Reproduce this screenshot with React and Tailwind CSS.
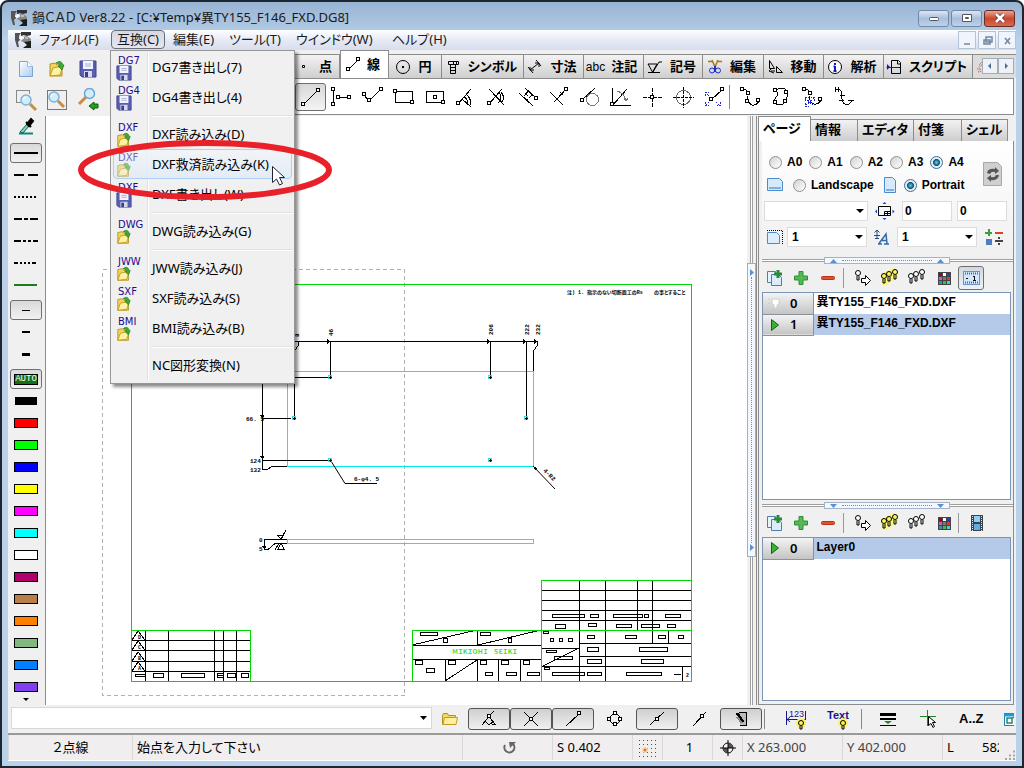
import React, { useState } from 'react';
import clsx from 'clsx';

const UI_FONT = "font-['Noto_Sans','Noto_Sans_CJK_JP',sans-serif]";
const BOLD_FONT = "font-['Liberation_Sans','Noto_Sans_CJK_JP',sans-serif] font-bold";

/* ---------- small drawing helpers ---------- */

const Svg = ({ w = 24, h = 24, children, className, crisp }) => (
    <svg
        width={w}
        height={h}
        viewBox={`0 0 ${w} ${h}`}
        fill="none"
        stroke="#000"
        shapeRendering={crisp ? 'crispEdges' : undefined}
        className={clsx('shrink-0', className)}
        aria-hidden="true"
    >
        {children}
    </svg>
);

const Node = ({ x, y }) => (
    <rect x={Math.floor(x) - 1.5} y={Math.floor(y) - 1.5} width="3" height="3" fill="#fff" stroke="#000" shapeRendering="crispEdges" />
);

const AppIcon = () => (
    <Svg w={18} h={18}>
        <path d="M1 2h6l-2 3 1 4-2 2 1 5H3L1 9z" fill="#555" stroke="none" />
        <path d="M7 1h10v3l-4 1-4-1-2 3z" fill="#333" stroke="none" />
        <path d="M8 6l5-1 4 3v3l-6 1-4-2z" fill="#888" stroke="none" />
        <path d="M10 11l7-1v7H9l4-3z" fill="#1c1c1c" stroke="none" />
        <path d="M5 7l3-2 2 2-3 2zM11 7h3" fill="#fff" stroke="#eee" />
    </Svg>
);

const Page = () => (
    <Svg>
        <defs>
            <linearGradient id="pg" x1="0" y1="0" x2="1" y2="1">
                <stop offset="0" stopColor="#fff" />
                <stop offset="1" stopColor="#a8ccf2" />
            </linearGradient>
        </defs>
        <path d="M5.500 4.500h8l5 5v10h-13z" fill="url(#pg)" stroke="#7da3cf" />
        <path d="M13.500 4.500v5h5" fill="#fff" stroke="#9dbde0" />
    </Svg>
);

const FolderOpen = ({ size = 24, box = '0 0 24 24' }) => (
    <svg width={size} height={size} viewBox={box} fill="none" className="shrink-0" aria-hidden="true">
        <path d="M5 7l5-1 2 2h5v11H5z" fill="#f3d35c" stroke="#b8901c" />
        <path d="M5 19l3-8 10-2-3 9z" fill="#fff2a0" stroke="#c39a22" />
        <path d="M11 6q5-4 7 2h1l-2 5-4-4h2q-1-3-4-3z" fill="#3faa35" stroke="#1d7a1a" strokeWidth=".7" />
    </svg>
);

const Floppy = ({ size = 24, box = '0 0 24 24' }) => (
    <svg width={size} height={size} viewBox={box} fill="none" className="shrink-0" aria-hidden="true">
        <path d="M4 4h16v16H6l-2-2z" fill="#5a5fb0" stroke="#3f438f" />
        <rect x="7" y="4" width="10" height="8" fill="#f3f4ff" />
        <path d="M9 7h6M9 9h6" stroke="#a9aed8" />
        <rect x="8" y="14" width="8" height="6" fill="#d5d8ee" />
        <rect x="9" y="15" width="3" height="5" fill="#3b3f7d" />
    </svg>
);

const Lens = ({ x, y }) => (
    <g>
        <path d={`M${x + 4} ${y + 4}l6 6`} stroke="#c98b46" strokeWidth="3" />
        <circle cx={x} cy={y} r="5" fill="#d3ecfa" stroke="#7fb2d6" strokeWidth="1.500" />
        <path d={`M${x - 3} ${y}q1-3 3-3`} stroke="#fff" />
    </g>
);

const ZoomArea = () => (
    <Svg>
        <path d="M2 2.500h13M2.500 2v12M15.500 2v4M2 14.500h5" stroke="#888" />
        <Lens x={12} y={12} />
    </Svg>
);
const ZoomFit = () => (
    <Svg>
        <rect x="2.500" y="2.500" width="19" height="19" stroke="#777" />
        <Lens x={9} y={9} />
    </Svg>
);
const ZoomBack = () => (
    <Svg>
        <path d="M10 9l-7 7" stroke="#c98b46" strokeWidth="3" />
        <circle cx="13.500" cy="5.500" r="5" fill="#d3ecfa" stroke="#6aa5d8" strokeWidth="1.500" />
        <path d="M13 18l5-4v2h4v4h-4v2z" fill="#1ea01e" stroke="#0c600c" />
    </Svg>
);

const Copy = () => (
    <Svg w={20} h={20}>
        <path d="M2.500 3.500h8v11h-8z" fill="#eaf3fc" stroke="#4d7cae" />
        <path d="M6.500 6.500h7l3 3v8h-10z" fill="#dcecfb" stroke="#4d7cae" />
        <path d="M13 2v8M9 6h8" stroke="#2a8a3a" strokeWidth="3" />
    </Svg>
);
const Plus = () => (
    <Svg w={20} h={20}>
        <path d="M8 3.500h4v4.500h4.500v4H12v4.500H8V12H3.500V8H8z" fill="#55b955" stroke="#2e8f34" />
    </Svg>
);
const Minus = () => (
    <Svg w={20} h={20}>
        <rect x="3.500" y="8.500" width="13" height="3" rx="1" fill="#e0522c" stroke="#b8341a" />
    </Svg>
);

const Bulb = ({ x, y, fill }) => (
    <g>
        <circle cx={x} cy={y} r="2.500" fill={fill} stroke="#000" />
        <path d={`M${x - 1} ${y + 3}v4M${x + 1} ${y + 3}v4M${x - 1} ${y + 7}h2`} stroke="#000" />
    </g>
);
const BulbArrow = () => (
    <Svg w={20} h={20}>
        <Bulb x={5} y={5} fill="#fff" />
        <path d="M8.500 10.500h4v-3l5 5-5 5v-3h-4z" fill="#fff" />
    </Svg>
);
const Bulbs = ({ lit }) => (
    <Svg w={20} h={20}>
        {lit && <path d="M1 6L13 0l5 2v7L7 17H2z" fill="#f8f48a" stroke="none" />}
        <Bulb x={4} y={8} fill={lit ? '#fdf655' : '#fff'} />
        <Bulb x={9} y={6} fill={lit ? '#fdf655' : '#fff'} />
        <Bulb x={15} y={4} fill={lit ? '#fdf655' : '#fff'} />
    </Svg>
);
const Palette = () => (
    <Svg w={20} h={20}>
        <rect x="4" y="4" width="13" height="13" fill="#444" stroke="none" />
        {['#8d1010', '#fff', '#2a39c8', '#e04adf', '#777', '#f03030', '#15a0a8', '#38c038', '#2ad8e8'].map((c, i) => (
            <rect key={i} x={5 + (i % 3) * 4} y={5 + Math.floor(i / 3) * 4} width="3" height="3" fill={c} stroke="none" />
        ))}
    </Svg>
);
const Ruler = () => (
    <Svg w={20} h={20}>
        <rect x="2.500" y="3.500" width="16" height="13" fill="#d4e8fb" stroke="#6c93c8" />
        <path d="M4 5.500h14M4 14.500h14" stroke="#3f67b0" strokeDasharray="1 1" strokeWidth="2" />
        <path d="M5 10.500h2M13.500 8v5M12 8.500h1M12 12.500h3" stroke="#111" />
    </Svg>
);
const Film = () => (
    <Svg w={20} h={20}>
        <rect x="4" y="2" width="12" height="16" fill="#39414c" stroke="none" />
        <path d="M5.500 3v15M14.500 3v15" stroke="#dfe7f0" strokeDasharray="1 1" />
        <rect x="7" y="3" width="6" height="6" fill="#8fd0f5" stroke="none" />
        <rect x="7" y="11" width="6" height="6" fill="#5cb0e6" stroke="none" />
    </Svg>
);

/* ---------- menus ---------- */

const MENUS = [
    { label: 'ファイル(F)', w: 'w-[72px]' },
    { label: '互換(C)', w: 'w-[54px]' },
    { label: '編集(E)', w: 'w-[56px]' },
    { label: 'ツール(T)', w: 'w-[67px]' },
    { label: 'ウインドウ(W)', w: 'w-[96px]' },
    { label: 'ヘルプ(H)', w: 'w-[68px]' },
];

const COMPAT_MENU = [
    { tag: 'DG7', label: 'DG7書き出し(7)', save: true },
    { tag: 'DG4', label: 'DG4書き出し(4)', save: true },
    null,
    { tag: 'DXF', label: 'DXF読み込み(D)' },
    { tag: 'DXF', label: 'DXF救済読み込み(K)', active: true },
    { tag: 'DXF', label: 'DXF書き出し(W)', save: true },
    null,
    { tag: 'DWG', label: 'DWG読み込み(G)' },
    null,
    { tag: 'JWW', label: 'JWW読み込み(J)' },
    { tag: 'SXF', label: 'SXF読み込み(S)' },
    { tag: 'BMI', label: 'BMI読み込み(B)' },
    null,
    { label: 'NC図形変換(N)' },
];

const CompatMenu = () => (
    <div role="menu" className="absolute -left-px top-5 z-10 w-[185px] border border-[#979797] bg-[#f0f0f0] p-px pb-[3px] shadow-[3px_3px_3px_rgba(0,0,0,0.45)]">
        <div className="absolute bottom-0.5 left-[36px] top-0.5 w-0.5 border-l border-[#e0e0e0] bg-white" />
        {COMPAT_MENU.map((item, i) =>
            item === null ? (
                <div key={i} className="relative ml-[40px] flex h-[7px] items-center">
                    <div className="h-0.5 flex-1 border-t border-[#e0e0e0] bg-white" />
                </div>
            ) : (
                <button
                    key={i}
                    role="menuitem"
                    className={clsx(
                        'relative mx-px flex h-[30px] w-[179px] items-center rounded-sm border text-left text-[13px] text-black',
                        item.active ? 'border-[#aecff7] bg-linear-to-b from-[#f2f5f9]/80 to-[#dfeaf7]/80' : 'border-transparent'
                    )}
                >
                    <span className={clsx('flex h-full w-[38px] flex-col items-start justify-end pl-0.5', item.active && 'opacity-60')}>
                        {item.tag && (
                            <>
                                <span className="pl-0.5 font-['DejaVu_Sans'] text-[10px] leading-[9px] text-[#1d0a8c]">{item.tag}</span>
                                {item.save ? <Floppy size={16} box="3 3 18 18" /> : <FolderOpen size={16} box="3 3 18 18" />}
                            </>
                        )}
                    </span>
                    <span>{item.label}</span>
                </button>
            )
        )}
        {/* hand-drawn emphasis and the pointer lie over the menu */}
        <svg width="260" height="66" viewBox="0 0 260 66" className="pointer-events-none absolute left-[-36px] top-[86px] max-w-none" aria-hidden="true">
            <ellipse cx="130" cy="33" rx="124" ry="27" fill="none" stroke="#e8202a" strokeWidth="6" />
            <path d="M197.500 29.500v16l4-3.500 3 6 3-1.500-3-6h5z" fill="#fff" stroke="#223" />
        </svg>
    </div>
);

const CaptionButton = ({ label, close, children }) => (
    <button
        aria-label={label}
        className={clsx(
            'flex h-[17px] w-[31px] items-center justify-center rounded-[3px] border',
            close
                ? 'border-[#6b2a22] bg-linear-to-b from-[#e2a595] via-[#c9472c] to-[#d9694d]'
                : 'border-[#7288a8] bg-linear-to-b from-[#dbe7f5] via-[#a9bfda] to-[#bcd2ea]'
        )}
    >
        {children}
    </button>
);

const TitleBar = () => (
    <header className="flex h-[28px] items-center pl-0.5 pr-px pt-1 text-[13px] text-[#1a1a1a]">
        <AppIcon />
        <h1 className="ml-1 flex-1">鍋ＣＡＤ Ver8.22 - [C:¥Temp¥異TY155_F146_FXD.DG8]</h1>
        <div className="flex gap-0.5">
            <CaptionButton label="最小化">
                <Svg w={12} h={10}><rect x="1.500" y="4.500" width="9" height="3" rx="1" fill="#fff" stroke="#556" /></Svg>
            </CaptionButton>
            <CaptionButton label="最大化">
                <Svg w={12} h={10}><path d="M1.500 1.500h9v7h-9zM4.500 4.500h3v1h-3z" fill="#fff" stroke="#556" /></Svg>
            </CaptionButton>
            <CaptionButton label="閉じる" close>
                <Svg w={12} h={10}>
                    <path d="M2 1l8 8M10 1L2 9" stroke="#633" strokeWidth="4" />
                    <path d="M2 1l8 8M10 1L2 9" stroke="#fff" strokeWidth="2.500" />
                </Svg>
            </CaptionButton>
        </div>
    </header>
);

const MenuBar = () => (
    <nav className="flex h-[20px] items-center bg-linear-to-b from-white via-[#e6eaf5] to-[#d8ddee] pl-1.5 text-[13px] text-[#1a1a1a]">
        <AppIcon />
        <ul className="flex flex-1">
            {MENUS.map((m, i) => (
                <li key={m.label} className={clsx('relative shrink-0', m.w, i === 0 && 'ml-[7px]')}>
                    <button
                        className={clsx(
                            'h-[19px] whitespace-nowrap leading-[17px]',
                            i === 1 ? 'w-full rounded-sm border border-[#6a6e78] bg-linear-to-b from-[#d6d9e2] to-[#e4e6ee]' : i > 1 && 'pl-[8px]'
                        )}
                    >
                        {m.label}
                    </button>
                    {i === 1 && <CompatMenu />}
                </li>
            ))}
        </ul>
        <div className="flex gap-0.5">
            {[
                ['最小化', 'M5 12h6'],
                ['元に戻す', 'M7 5h6v5h-6zM5 8h6v4h-6z'],
                ['閉じる', 'M6 6l5 6M11 6l-5 6'],
            ].map(([label, d]) => (
                <button key={label} aria-label={label} className="flex h-[18px] w-[18px] items-center justify-center border border-[#b4c4d8] bg-[#f0f5fb]">
                    <Svg w={16} h={16}><path d={d} stroke="#7087a2" strokeWidth="1.500" /></Svg>
                </button>
            ))}
        </div>
    </nav>
);

/* ---------- top toolbar ---------- */

const TABS = [
    { label: '点', w: 'w-[48px]', icon: <path d="M7.500 7.500h2v2h-2z" fill="#fff" /> },
    {
        label: '線', w: 'w-[49px]', active: true,
        icon: <><path d="M4 13l9-9" /><Node x={3.5} y={13.5} /><Node x={13.5} y={3.5} /></>,
    },
    { label: '円', w: 'w-[53px]', icon: <><circle cx="9" cy="9" r="6.500" /><path d="M8 8h2v2H8z" fill="#000" stroke="none" /></> },
    { label: 'シンボル', w: 'w-[82px]', icon: <path d="M4.500 3.500h10v3h-10zM6.500 7v8.500h5V7M7 9.500h4M7 12.500h4M9.500 3v4M12.500 4v2" /> },
    { label: '寸法', w: 'w-[60px]', icon: <path d="M2 9l5 6M10 2l5 6M4 12l9-7M4 9v3h4M9 5h4v4" /> },
    { label: '注記', w: 'w-[60px]', abc: true },
    { label: '記号', w: 'w-[59px]', icon: <path d="M2 6h9l-4.500 8zM7 14l6-10h3M2 14.500h12" /> },
    {
        label: '編集', w: 'w-[61px]',
        icon: (
            <>
                <path d="M2 3.500h4M11 3.500h5M6 2l3 7 3-7" stroke="#a67c12" strokeWidth="1.500" />
                <circle cx="6" cy="12.500" r="2.500" stroke="#1c2fc4" />
                <circle cx="12" cy="12.500" r="2.500" stroke="#1c2fc4" />
                <path d="M8.500 8v6M9.500 8v6" stroke="#1c2fc4" />
            </>
        ),
    },
    { label: '移動', w: 'w-[60px]', icon: <path d="M3.500 2.500v8h5zM10.500 8.500v6h6zM5 13h4M5 11l-2 2 5 2" /> },
    {
        label: '解析', w: 'w-[60px]',
        icon: (
            <>
                <circle cx="9" cy="9" r="6.500" fill="#fff" />
                <path d="M9 5v2M9 8v5M7.500 8.500h1.500M7.500 13h3" stroke="#0c1cc8" strokeWidth="2" />
            </>
        ),
    },
    {
        label: 'スクリプト', w: 'w-[89px]',
        icon: (
            <>
                <path d="M6.500 2.500h7l2 2v11h-9zM6 9.500h10M12.500 3v3h3" />
                <path d="M2 6l3 3-3 3z" fill="#0c1cc8" stroke="none" />
                <path d="M1.500 9.500h12" stroke="#0c1cc8" />
            </>
        ),
    },
];

const LINE_TOOLS = [
    ['2点線', <><path d="M5 19L19 5" /><Node x={4.5} y={19.5} /><Node x={19.5} y={5.5} /></>],
    ['水平垂直線', <><path d="M3.500 5v14M8 12.500h12" /><Node x={3.5} y={4.5} /><Node x={3.5} y={19.5} /><Node x={8.500} y={12.500} /><Node x={19.5} y={12.5} /></>],
    ['連続線', <><path d="M3 10l5 6L20 4" /><Node x={3.5} y={9.500} /><Node x={8.5} y={15.5} /><Node x={20.5} y={4.5} /></>],
    ['矩形', <><path d="M3.500 6.500h17v11h-17z" /><Node x={3.5} y={6.5} /><Node x={20.5} y={17.5} /></>],
    ['中心矩形', <><path d="M3.500 6.500h17v11h-17z" /><Node x={12} y={12} /><Node x={20.5} y={17.5} /></>],
    ['角度線', <><path d="M4 19L17 4M8 14l9 8M10 12q4 2 4 8M12 9q5 4 5 11" /><Node x={4.500} y={18.500} /></>],
    ['二等分線', <><path d="M4 4l15 16M4 19L17 4M13 7q6 5 0 11M16 7q5 6 0 11" /><Node x={4.5} y={18.5} /></>],
    ['平行線', <><path d="M3 8l14 13M9 3l12 11M8 11l5-6M9 8l3 3" /><path d="M11 15l5-5" strokeDasharray="2 1" /><Node x={20.5} y={13.500} /></>],
    ['垂線', <><path d="M3 7l13 13M10 14l9-10M13 7l3 3M7 17l3-3" /><Node x={19.5} y={4.5} /></>],
    ['接線', <><path d="M4 15L17 3" /><circle cx="14.500" cy="14.500" r="6" stroke="#777" /><Node x={4.5} y={15.5} /></>],
    ['角度指定線', <><path d="M3.500 3v17h18M4 20L18 4" /><path d="M8 6q7 2 9 9M15 13l2 3 2-3" stroke="#777" /><Node x={3.5} y={19.5} /></>],
    ['中心線', <><path d="M12.500 3v19M3 12.500h19" strokeDasharray="4 1" /><Node x={12.500} y={12.500} /></>],
    ['円中心線', <><circle cx="12.500" cy="12.500" r="7" stroke="#666" /><path d="M12.500 2v21M2 12.500h21" strokeDasharray="3 1" /></>],
    ['線移動', <><path d="M10 14L20 5" /><path d="M3 7l4 4M7 17l-4 4M14 17l4 4M3.500 11V7.500H7M3.500 17v3.500H7M18.500 17v3.500H15" stroke="#1a2ad0" strokeDasharray="2 1" /><Node x={9.5} y={14.5} /><Node x={20.5} y={4.5} /></>],
];

const CURVE_TOOLS = [
    ['スプライン', <><path d="M4 4q7 0 6 7t4 9q4 1 7-4" /><Node x={4.5} y={4.5} /><Node x={10.5} y={8.5} /><Node x={9.500} y={16.5} /><Node x={20.5} y={15.5} /></>],
    ['閉曲線', <><path d="M7 5q4-3 9-1 4 4 1 12-4 6-10 3-3-4 1-8 1-3-1-6z" /><Node x={6.5} y={5.5} /><Node x={17.5} y={7.5} /><Node x={16.5} y={16.5} /><Node x={6.5} y={17.5} /></>],
    ['曲線移動', <><path d="M4 4q7 0 6 7t4 8q4 1 7-4" /><path d="M5 13l9 8M14 13l-9 8M5.500 16v-3.500H9M5.500 18v3.500H9M14.500 16v-3.500H11" stroke="#1a2ad0" strokeDasharray="2 1" /><Node x={4.5} y={4.5} /><Node x={10.5} y={8.5} /><Node x={20.5} y={14.5} /></>],
    ['曲線編集', <path d="M4 4.500q8-1 7 6t4 9q3 1 6-4M4.500 2v5M7.500 2v5M9 10.500h5M8 15.500h5M17 15.500h6" />],
];

const ToolButton = ({ label, icon, active }) => (
    <button
        aria-label={label}
        className={clsx(
            'flex h-[28px] w-[31px] items-center justify-center rounded-[3px] border',
            active ? 'border-[#6f6f6f] bg-linear-to-b from-[#d8d8d8] to-[#f4f4f4]' : 'border-transparent'
        )}
    >
        <Svg crisp>{icon}</Svg>
    </button>
);

const Toolbar = () => (
    <div className="flex h-[66px] bg-[#f0f0f0]">
        <div className="grid w-[284px] shrink-0 grid-cols-[31px_31px_31px] content-start gap-y-[6px] pl-0.5 pt-[6px]">
            {[
                ['新規', <Page />],
                ['開く', <FolderOpen />],
                ['保存', <Floppy />],
                ['範囲拡大', <ZoomArea />],
                ['全体表示', <ZoomFit />],
                ['前の表示', <ZoomBack />],
            ].map(([label, icon]) => (
                <button key={label} aria-label={label} className="flex h-[25px] items-center justify-center">{icon}</button>
            ))}
        </div>
        <div className="min-w-0 flex-1">
            <div className="relative flex h-[28px] items-end overflow-hidden">
                {TABS.map((t) => (
                    <button
                        key={t.label}
                        className={clsx(
                            BOLD_FONT,
                            'flex shrink-0 items-center justify-center whitespace-nowrap border-r pr-1 text-[13px] leading-none',
                            t.w,
                            t.active
                                ? 'h-[28px] gap-1 border-l border-t border-[#8c8c8c] bg-white'
                                : 'h-[24px] gap-1.5 border-t border-[#8c8c8c] bg-linear-to-b from-[#f3f3f3] to-[#cfcfcf]'
                        )}
                    >
                        {t.abc ? <span className="font-['Liberation_Sans'] text-xs font-normal">abc</span> : <Svg w={18} h={18}>{t.icon}</Svg>}
                        {t.label}
                    </button>
                ))}
                <span className="flex h-[24px] flex-1 items-center border-t border-[#8c8c8c] bg-[#dcdcdc]">
                    <Svg w={18} h={18}><path d="M9 4l-3 3h3l-5 4h4l-3 3 6-1" stroke="#e04a4a" strokeDasharray="1 1" /></Svg>
                </span>
                <div className="absolute bottom-1 right-0.5 flex">
                    <button aria-label="前のタブ" className="flex h-[16px] w-[16px] items-center justify-center border border-[#a5adb8] bg-[#eef1f5]">
                        <Svg w={8} h={8}><path d="M5 1v6L2 4z" fill="#4a6a9a" stroke="none" /></Svg>
                    </button>
                    <button aria-label="次のタブ" className="flex h-[16px] w-[16px] items-center justify-center border border-[#a5adb8] bg-[#eef1f5]">
                        <Svg w={8} h={8}><path d="M3 1v6l3-3z" fill="#4a6a9a" stroke="none" /></Svg>
                    </button>
                </div>
            </div>
            <div className="mr-0.5 flex h-[37px] items-center border-y border-r border-[#8c8c8c] bg-white pl-[3px]">
                {LINE_TOOLS.map(([label, icon], i) => <ToolButton key={label} label={label} icon={icon} active={i === 0} />)}
                <div className="mr-1 h-6 w-px bg-[#888]" />
                {CURVE_TOOLS.map(([label, icon]) => <ToolButton key={label} label={label} icon={icon} />)}
            </div>
        </div>
    </div>
);

/* ---------- left palette ---------- */

const LINE_TYPES = [
    ['実線', null, true],
    ['破線', '10 4'],
    ['点線', '2 2'],
    ['一点鎖線', '8 2 4 2'],
    ['二点鎖線', '7 2 3 2 3 2'],
    ['三点鎖線', '4 2 2 2 2 2 2 2'],
];
const COLORS = [
    ['黒', 'bg-black'], ['赤', 'bg-[#ff0000]'], ['緑', 'bg-[#00ff00]'], ['青', 'bg-[#0000ff]'], ['黄', 'bg-[#ffff00]'],
    ['紫', 'bg-[#ff00ff]'], ['水色', 'bg-[#00ffff]'], ['白', 'bg-white'], ['赤紫', 'bg-[#b0006c]'], ['茶', 'bg-[#b88048]'],
    ['橙', 'bg-[#ff8000]'], ['深緑', 'bg-[#80b880]'], ['空色', 'bg-[#0080ff]'], ['青紫', 'bg-[#8040f0]'],
];

const PaletteButton = ({ label, active, children }) => (
    <button
        aria-label={label}
        className={clsx(
            'flex h-[20px] w-[32px] items-center justify-center rounded-[3px] border',
            active ? 'border-[#707070] bg-linear-to-b from-[#d9d9d9] to-[#f2f2f2]' : 'border-transparent'
        )}
    >
        {children}
    </button>
);

const LeftPalette = () => (
    <aside className="flex w-[38px] shrink-0 flex-col items-center border-r border-[#8c8c8c] bg-[#f0f0f0] pr-px">
        <button aria-label="スポイト" className="flex h-[27px] items-start">
            <Svg w={20} h={20}>
                <path d="M3 17.500h14" stroke="#0b8585" strokeWidth="2" />
                <path d="M4 16l7-8 2 2-6 7z" fill="#7fd0d0" stroke="#063" />
                <path d="M10 6l5 5M11 8l4-5 2 2-4 5z" fill="#000" strokeWidth="2" />
            </Svg>
        </button>
        <div className="flex flex-col gap-0.5">
            {LINE_TYPES.map(([label, dash, active]) => (
                <PaletteButton key={label} label={label} active={active}>
                    <Svg w={24} h={4}><path d="M0 2h24" strokeWidth="2" strokeDasharray={dash || undefined} /></Svg>
                </PaletteButton>
            ))}
            <PaletteButton label="線色">
                <Svg w={24} h={4}><path d="M0 2h23" strokeWidth="2" stroke="#1b7d1b" /></Svg>
            </PaletteButton>
        </div>
        <div className="mt-[5px] flex flex-col gap-0.5">
            <PaletteButton label="細線" active><span className="h-px w-2 bg-black" /></PaletteButton>
            <PaletteButton label="中線"><span className="h-0.5 w-2 bg-black" /></PaletteButton>
            <PaletteButton label="太線"><span className="h-[3px] w-2 bg-black" /></PaletteButton>
        </div>
        <div className="mt-[5px] flex flex-col gap-0.5">
            <PaletteButton label="AUTO" active>
                <span className="h-[11px] w-6 border border-black bg-[#167016] text-center font-['Liberation_Mono'] text-[9px] leading-[9px] text-white">AUTO</span>
            </PaletteButton>
            {COLORS.map(([label, bg], i) => (
                <PaletteButton key={label} label={label}>
                    <span className={clsx('border border-black', i === 0 ? 'h-2 w-[22px]' : 'h-[10px] w-6', bg)} />
                </PaletteButton>
            ))}
        </div>
        <Svg w={8} h={5}><path d="M1 1h6L4 4z" fill="#000" stroke="none" /></Svg>
    </aside>
);

/* ---------- drawing sheet ---------- */

// title block: small boxed labels, [x, y, w, h]
const CELLS = [
    [552, 614, 32, 3], [590, 614, 8, 3], [613, 614, 29, 3], [644, 614, 4, 3], [665, 614, 15, 3],
    [555, 624, 10, 4], [588, 623, 8, 3], [616, 624, 15, 3], [641, 624, 18, 3], [667, 624, 8, 3],
    [587, 635, 7, 3], [625, 635, 11, 3], [658, 635, 7, 3], [678, 635, 5, 3],
    [550, 638, 3, 3], [559, 638, 3, 3], [568, 638, 4, 3], [543, 631, 5, 2], [546, 650, 10, 2], [554, 656, 18, 3],
    [587, 647, 11, 4], [639, 647, 28, 4], [587, 659, 14, 4], [641, 659, 22, 4], [544, 667, 5, 2],
    [552, 672, 32, 3], [587, 672, 14, 3], [626, 672, 35, 3],
    [420, 632, 17, 3], [443, 638, 4, 4], [480, 632, 10, 3], [508, 638, 3, 4],
    [415, 660, 7, 4], [426, 668, 8, 4], [448, 660, 7, 4], [480, 660, 6, 4], [501, 660, 7, 4], [523, 660, 6, 4],
    [485, 672, 7, 3], [506, 672, 10, 3], [527, 672, 12, 3],
    [135, 674, 10, 2], [153, 673, 10, 4], [181, 673, 23, 4], [217, 673, 6, 2], [217, 675, 6, 2], [227, 673, 8, 4], [241, 673, 7, 4],
];
const HOLES = [[330, 377], [490, 377], [294, 418], [526, 418], [330, 460], [490, 460]];
const TOP_DIMS = [[299, 337, '8'], [333, 336, '46'], [493, 335, '206'], [529, 335, '222'], [540, 335, '232']];
const LEFT_DIMS = [[246, 421, '66. 5'], [250, 463, '124'], [250, 472, '132'], [259, 542, '0'], [259, 551, '5']];

const Drawing = () => (
    <svg
        viewBox="46 116 701 588"
        width="701"
        height="588"
        fill="none"
        stroke="#000"
        shapeRendering="crispEdges"
        className="block max-w-none font-['Liberation_Mono','Noto_Sans_CJK_JP',monospace]"
    >
        <rect x="102.500" y="269.500" width="302" height="426" stroke="#b0b0b0" strokeDasharray="4 3" />

        {/* table rules */}
        <path d="M579.500 581v100M605.500 581v100M637.500 581v49M652.500 581v62M668.500 630v13M682.500 667v14" />
        <path d="M541 590.500h150M541 600.500h150M541 610.500h150M541 620.500h150M579 643.500h112M579 656.500h112M541 666.500h150M541 648.500h38M674 674.500h7" />
        <path d="M412 645.500h129M412 659.500h129M477.500 630v15M445.500 659v22M477.500 659v22M498.500 659v22M520.500 659v22" />
        <path d="M541 667l38-19M412 645l65-15M478 645l63-15M445 681l32-21" />
        <path d="M145.500 631v50M168.500 631v50M214.500 631v50M223.500 631v50M236.500 631v50M132 640.500h118M132 650.500h118M132 661.500h118M132 671.500h118" />
        <path d="M132 640l6-9 7 9M132 650l6-9 7 9M132 661l6-9 7 9M132 671l6-9 7 9" />
        {CELLS.map(([x, y, w, h], i) => <rect key={i} x={x + 0.5} y={y + 0.5} width={w} height={h} />)}
        <g fill="#000" stroke="none" fontSize="5" fontWeight="bold">
            <text x="138" y="639">D</text>
            <text x="138" y="649">C</text>
            <text x="138" y="660">B</text>
            <text x="138" y="670">A</text>
            <text x="686" y="677">2</text>
        </g>
        <text x="452" y="654" fontSize="6" fontWeight="bold" fill="#2fe02f" stroke="none">ＭＩＫＩＯＨＩ　ＳＥＩＫＩ</text>

        {/* sheet frame */}
        <g stroke="#00d800">
            <rect x="131.500" y="284.500" width="560" height="397" />
            <path d="M131 630.500h119.500v51M412.500 681v-50.500h279M541.500 681V580.500h150" />
        </g>

        {/* plate, front and side view */}
        <rect x="287.500" y="371.500" width="246" height="95" stroke="#00f0f0" />
        <rect x="287.500" y="539.500" width="246" height="4" stroke="#00f0f0" />

        {/* dimensions */}
        <path d="M294 341.500h244M330.500 341v34M490.500 341v34M526.500 341v76M294.500 351v66M533.500 351v20M537.500 341v4l-4 6M298.500 341v4l-4 6" />
        <path d="M262.500 371v99M262 418.500h29M294 377.500h35M262 460.500h67M262 469.500h5l6-3.500h14" />
        <path d="M331 461l14 22.500h32M533 466l22 23" shapeRendering="auto" />
        <path d="M264 539.500h23M264.500 539v11M264 549.500h4l7-6h12M275 550l4-7M281 539l5-9M277 535l4 4 3-4zM278 549l3-6 3 6z" />
        <path d="M327 339l4 2.500-4 2.500zM487 339l4 2.500-4 2.500zM523 339l4 2.500-4 2.500zM534 339l4 2.500-4 2.500zM260 456l2.500 4 2-4zM260 415l2.500 4 2-4zM262 546l2.500 4 2-4zM533 466l4 2-2 2z" fill="#000" stroke="none" />
        {HOLES.map(([x, y]) => (
            <g key={`${x}-${y}`}>
                <rect x={x - 1.5} y={y - 1.5} width="3" height="3" stroke="#3bd9d9" />
                <path d={`M${x - 1} ${y + 0.5}h3M${x + 0.5} ${y - 1}v3`} />
            </g>
        ))}
        <g fill="#000" stroke="none" fontSize="6" fontWeight="bold">
            {TOP_DIMS.map(([x, y, t]) => <text key={t} x={x} y={y} transform={`rotate(-90 ${x} ${y})`}>{t}</text>)}
            {LEFT_DIMS.map(([x, y, t]) => <text key={`${y}`} x={x} y={y}>{t}</text>)}
            <text x="354" y="481">6-φ4. 5</text>
            <text x="543" y="471" transform="rotate(45 543 471)">4-R2</text>
        </g>
        <g fill="#000" stroke="none" fontSize="5" fontWeight="bold">
            <text x="567" y="294">注) 1. 指示のない切断面工のRs</text>
            <text x="654" y="294">の事とすること</text>
        </g>
    </svg>
);

const VerticalSplitter = () => (
    <div className="flex w-[10px] shrink-0 flex-col items-center border-r border-[#8c8c8c] bg-[#f0f0f0]">
        <div className="h-[147px] w-[3px] border-x border-[#a0a0a0] bg-white" />
        <div className="flex h-[294px] w-[9px] flex-col items-center justify-between border border-[#9fb0c4] bg-[#f4f8fd] py-1">
            <Svg w={7} h={9}><path d="M2 1v7l4-3.500z" fill="#5a8fd0" stroke="none" /></Svg>
            <div className="w-0 flex-1 border-l border-dotted border-[#5a8fd0]" />
            <Svg w={7} h={9}><path d="M2 1v7l4-3.500z" fill="#5a8fd0" stroke="none" /></Svg>
        </div>
        <div className="w-[3px] flex-1 border-x border-[#a0a0a0] bg-white" />
    </div>
);

/* ---------- right panel ---------- */

const SIDE_TABS = [
    ['ページ', 'w-[53px]'],
    ['情報', 'w-[47px]'],
    ['エディタ', 'w-[56px]'],
    ['付箋', 'w-[48px]'],
    ['シェル', 'w-[46px]'],
];

const Radio = ({ name, label, checked, onChange }) => (
    <label className="flex items-center gap-[5px]">
        <input
            type="radio"
            name={name}
            checked={checked}
            onChange={onChange}
            className="h-[13px] w-[13px] shrink-0 appearance-none rounded-full border border-[#8e8f8f] bg-linear-to-br from-[#d2d2d2] to-white checked:border-[#3a6e96] checked:bg-[radial-gradient(circle,#5bd0f5_0,#14506f_40%,#e4eef5_50%)]"
        />
        {label}
    </label>
);

const Combo = ({ label, options, className }) => (
    <div className={clsx('relative', className)}>
        <select aria-label={label} className="h-[20px] w-full appearance-none border border-[#dcdcdc] bg-white pl-1 text-xs outline-none">
            {options.map((o) => <option key={o}>{o}</option>)}
        </select>
        <Svg w={8} h={5} className="pointer-events-none absolute right-1 top-2"><path d="M0 0h8L4 4z" fill="#000" stroke="none" /></Svg>
    </div>
);

const SheetIcon = ({ wide }) => (
    <Svg w={18} h={16}>
        <path d={wide ? 'M1.500 1.500h12l3 3v9h-15z' : 'M3.500.500h8l3 3v12h-11z'} fill="#d6eafc" stroke="#4a8ccc" />
        <path d={wide ? 'M3 11h12' : 'M5 13h8'} stroke="#7fb0e2" strokeWidth="2" />
    </Svg>
);

const HorizontalSplitter = ({ down }) => {
    const d = down ? 'M1 1h7L4.500 5z' : 'M1 5h7L4.500 1z';
    return (
        <div className="flex h-[7px] items-center">
            <div className="h-[3px] flex-1 border-y border-[#a0a0a0] bg-white" />
            <div className="flex h-[7px] w-[126px] items-center gap-1 border border-[#a4b4c8] bg-[#f4f8fd] px-1">
                <Svg w={9} h={5}><path d={d} fill="#5a8fd0" stroke="none" /></Svg>
                <div className="h-0 flex-1 border-t border-dotted border-[#5a8fd0]" />
                <Svg w={9} h={5}><path d={d} fill="#5a8fd0" stroke="none" /></Svg>
            </div>
            <div className="h-[3px] w-[63px] border-y border-[#a0a0a0] bg-white" />
        </div>
    );
};

const LayerToolbar = ({ children }) => (
    <div className="flex h-[28px] items-center pl-[3px]">
        <button aria-label="複製" className="w-[26px]"><Copy /></button>
        <button aria-label="追加" className="w-[27px]"><Plus /></button>
        <button aria-label="削除" className="w-[25px]"><Minus /></button>
        <div className="mr-[9px] h-5 w-px bg-[#999]" />
        <button aria-label="表示切替" className="w-[27px]"><BulbArrow /></button>
        <button aria-label="全て表示" className="w-[27px]"><Bulbs lit /></button>
        <button aria-label="全て非表示" className="w-[27px]"><Bulbs /></button>
        <button aria-label="色" className="w-[24px]"><Palette /></button>
        {children}
    </div>
);

const LayerTable = ({ rows, label, className }) => (
    <div className={clsx('mr-0.5 border border-[#7b95b5] bg-white', className)}>
        <table aria-label={label} className="w-full border-collapse">
            <tbody>
                {rows.map((r) => (
                    <tr key={r.no} className={clsx('h-[21px]', r.active && 'bg-[#b5cae8]')}>
                        <td className="h-[21px] w-[50px] border-b border-r border-[#8a929c] bg-linear-to-b from-[#f4f4f4] to-[#c4c4c4] p-0">
                            <div className="flex items-center gap-[7px] pl-1">
                                <Svg w={16} h={14}>
                                    {r.active
                                        ? <path d="M4.500 1.500v11l7-5.500z" fill="#36b336" stroke="#166016" />
                                        : <path d="M5 3h7v5l-2 1v3H7V9L5 8zM1 3h2M1 7h2" fill="#fff" stroke="#ccc" />}
                                </Svg>
                                <span className="font-['Noto_Sans'] text-[13px] font-semibold leading-none">{r.no}</span>
                            </div>
                        </td>
                        <td className="p-0 pb-1 pl-[3px] text-xs leading-none">{r.name}</td>
                    </tr>
                ))}
            </tbody>
        </table>
    </div>
);

const RightPanel = () => {
    const [size, setSize] = useState('A4');
    const [dir, setDir] = useState('Portrait');

    return (
        <aside className={clsx(BOLD_FONT, 'flex w-[259px] shrink-0 flex-col bg-[#f0f0f0] pl-px pr-0.5 text-[13px]')}>
            <div className="flex h-[25px] items-end">
                {SIDE_TABS.map(([label, w], i) => (
                    <button
                        key={label}
                        className={clsx(
                            'border-r border-t border-[#8c8c8c] pb-0.5 pl-1 text-left leading-none',
                            w,
                            i === 0 ? 'h-[25px] border-l bg-white' : 'h-[22px] bg-linear-to-b from-[#f2f2f2] to-[#cdcdcd]'
                        )}
                    >
                        {label}
                    </button>
                ))}
            </div>
            <div className="flex flex-1 flex-col border border-t-0 border-[#8c8c8c] pb-[3px] pl-[3px]">
                <div className="flex h-[116px] flex-col bg-linear-to-b from-white to-[#f0f0f0] pt-[13px] text-xs">
                    <div className="flex">
                        <div className="w-[221px]">
                            <div className="flex h-4 items-center gap-[7px] pl-[7px]">
                                {['A0', 'A1', 'A2', 'A3', 'A4'].map((s) => (
                                    <Radio key={s} name="paper" label={s} checked={size === s} onChange={() => setSize(s)} />
                                ))}
                            </div>
                            <div className="mt-[7px] flex h-4 items-center pl-1">
                                <SheetIcon wide />
                                <div className="pl-[9px]">
                                    <Radio name="dir" label="Landscape" checked={dir === 'Landscape'} onChange={() => setDir('Landscape')} />
                                </div>
                                <div className="pl-[7px]"><SheetIcon /></div>
                                <div className="pl-[5px]">
                                    <Radio name="dir" label="Portrait" checked={dir === 'Portrait'} onChange={() => setDir('Portrait')} />
                                </div>
                            </div>
                        </div>
                        <button aria-label="更新" className="mt-2 h-[24px]">
                            <Svg w={20} h={24}>
                                <path d="M.500.500h14l4 4v19H.500z" fill="#cfcfcf" stroke="#a8a8a8" />
                                <path d="M4 11q1-5 8-4V5l4 4-4 3v-2q-4-1-5 2zM16 13q-1 6-8 5v2l-4-4 4-3v2q4 1 5-2z" fill="#555" stroke="none" />
                            </Svg>
                        </button>
                    </div>
                    <div className="mt-[8px] flex items-center">
                        <Combo label="用紙名" options={['']} className="ml-0.5 w-[104px]" />
                        <Svg w={20} h={18} className="mx-[7px]">
                            <path d="M3.500 4.500h12v9h-12zM9.500 13V9.500h6M9 11.500h6M12.500 10v3" />
                            <path d="M9.500 0l2 2h-4zM9.500 18l2-2h-4zM0 9.500l2-2v4zM19.500 9.500l-2-2v4z" fill="#1a3ad0" stroke="none" />
                        </Svg>
                        <input aria-label="原点X" defaultValue="0" className="h-[20px] w-[50px] border border-[#dcdcdc] bg-white pl-0.5" />
                        <input aria-label="原点Y" defaultValue="0" className="ml-[5px] h-[20px] w-[50px] border border-[#dcdcdc] bg-white pl-0.5" />
                    </div>
                    <div className="mt-[6px] flex items-center pl-1">
                        <Svg w={18} h={16}>
                            <path d="M1.500 3.500h9l3 3v8h-12z" fill="#dcedfc" stroke="#4a8ccc" />
                            <path d="M1 1.500h15.500V15" strokeDasharray="1 1" />
                        </Svg>
                        <Combo label="縮尺" options={['1']} className="ml-[3px] w-[80px]" />
                        <Svg w={18} h={18} className="mx-1.5">
                            <path d="M4 2v8M1.500 4.500L4 2l2.500 2.500M1 7.500h6M2 10.500h4" stroke="#234a80" />
                            <path d="M5 16h4M6 15.500L13 6l1 9.500M11 16h5M9 12.500h5" stroke="#336aa8" strokeWidth="1.500" />
                        </Svg>
                        <Combo label="文字倍率" options={['1']} className="w-[80px]" />
                        <Svg w={20} h={18} className="ml-[7px]">
                            <path d="M5 1v7M1 5h7" stroke="#3a9e3a" strokeWidth="2" />
                            <path d="M11 5h8" stroke="#d04a2a" strokeWidth="2" />
                            <rect x="2" y="11" width="6" height="6" fill="#4a80c0" stroke="none" />
                            <path d="M11 13h8M14 10h2M14 16h2" stroke="#444" strokeWidth="2" />
                        </Svg>
                    </div>
                </div>
                <HorizontalSplitter />
                <LayerToolbar>
                    <button aria-label="ルーラー" className="flex h-6 w-[26px] items-center justify-center rounded-[3px] border border-[#6f6f6f] bg-linear-to-b from-[#d2d8e0] to-[#eef2f7]">
                        <Ruler />
                    </button>
                </LayerToolbar>
                <LayerTable
                    label="ページ一覧"
                    className="h-[208px]"
                    rows={[
                        { no: 0, name: '異TY155_F146_FXD.DXF' },
                        { no: 1, name: '異TY155_F146_FXD.DXF', active: true },
                    ]}
                />
                <div className="mt-0.5"><HorizontalSplitter down /></div>
                <LayerToolbar>
                    <div className="mr-2 h-5 w-px bg-[#999]" />
                    <button aria-label="レイヤ表示"><Film /></button>
                </LayerToolbar>
                <LayerTable label="レイヤ一覧" className="flex-1" rows={[{ no: 0, name: 'Layer0', active: true }]} />
            </div>
        </aside>
    );
};

/* ---------- bottom bars ---------- */

const SNAPS = [
    ['近傍', true, <><path d="M12 9l5-5M11 11l-6 7M13 11l5 6M8 14l4 4 4-3M15 17.500h4" /><Node x={12.5} y={9.5} /></>],
    ['交点', true, <><path d="M5 5l14 14M19 5L5 19" /><Node x={12} y={12} /></>],
    ['端点', true, <><path d="M5 19L18 7" /><Node x={18.5} y={6.5} /></>],
    ['円周点', false, <><circle cx="12" cy="12" r="5" /><Node x={12} y={6.5} /><Node x={12} y={17.5} /><Node x={6.5} y={12} /><Node x={17.5} y={12} /></>],
    ['線上点', true, <><path d="M5 18L19 5" /><Node x={12} y={12} /></>],
    ['中点', false, <><path d="M6 19L19 5" /><Node x={15.5} y={9.500} /></>],
    ['図形', true, <><path d="M10 5.500h7v13h-6" fill="#bbb" /><path d="M8 6l6 9" strokeWidth="3" /><path d="M8 10l5 6" stroke="#888" strokeWidth="2" /></>],
];

const LampBulb = ({ x, y }) => (
    <g>
        <circle cx={x} cy={y} r="5" fill="#f7f36a" stroke="none" />
        <circle cx={x} cy={y} r="2.500" fill="#fff34a" />
        <path d={`M${x - 1} ${y + 3}v3h2v-3`} />
    </g>
);

const CommandBar = () => (
    <div className="flex h-[30px] items-center overflow-hidden border-b-2 border-[#9a9a9a] bg-[#f0f0f0] pl-[3px] pr-0.5">
        <div className="relative flex-1">
            <select aria-label="コマンド入力" className="h-[22px] w-full appearance-none border border-[#d8d8d8] bg-white">
                <option></option>
            </select>
            <Svg w={8} h={5} className="pointer-events-none absolute right-1 top-[9px]"><path d="M0 0h7L3.500 4z" fill="#000" stroke="none" /></Svg>
        </div>
        <button aria-label="開く" className="mx-2 w-[20px]">
            <Svg w={20} h={18}>
                <path d="M2.500 14.500v-9l1-2h4l1 2h7v2" fill="#f5d95f" stroke="#b88f1d" />
                <path d="M3 14.500l1.500-7h13l-1.500 7z" fill="#fff0a0" stroke="#c39a22" />
            </Svg>
        </button>
        {SNAPS.map(([label, on, icon]) => (
            <button
                key={label}
                aria-label={label}
                className={clsx(
                    'flex h-[22px] w-[42px] items-center justify-center rounded-[3px] border',
                    on ? 'border-[#555] bg-linear-to-b from-[#cfcfcf] to-[#f0f0f0]' : 'border-transparent'
                )}
            >
                <Svg crisp>{icon}</Svg>
            </button>
        ))}
        <div className="ml-0.5 mr-[19px] h-5 w-px bg-[#888]" />
        <button aria-label="寸法表示" className="w-[43px]">
            <Svg w={24} h={22}>
                <path d="M2.500 3v14M21.500 3v8M3 11.500h19M6 9l-3 2.500L6 14" stroke="#15158c" />
                <text x="5" y="9" fontSize="9" fill="#15158c" stroke="none" className="font-['Liberation_Sans']">123</text>
                <LampBulb x={17} y={15} />
            </Svg>
        </button>
        <button aria-label="文字表示" className="w-[34px]">
            <Svg w={24} h={22}>
                <text x="0" y="11" fontSize="11" fontWeight="bold" fill="#15158c" stroke="none" className="font-['Liberation_Sans']">Text</text>
                <LampBulb x={16} y={15} />
            </Svg>
        </button>
        <div className="mr-4 h-5 w-px bg-[#888]" />
        <button aria-label="線幅" className="w-[41px]">
            <Svg w={20} h={20}>
                <path d="M2 5.500h16" strokeWidth="3" />
                <path d="M2 10h16" strokeWidth="2" />
                <path d="M6 12h8l-4 3z" fill="#1b8a1b" stroke="none" />
                <path d="M2 16.500h16" />
            </Svg>
        </button>
        <button aria-label="カーソル" className="w-[40px]">
            <Svg w={20} h={20}>
                <path d="M1 7.500h16M8.500 1v16" stroke="#1b8a1b" />
                <path d="M9.500 7.500v9l2.500-2 2 4 1.500-1-2-4h3z" fill="#fff" />
            </Svg>
        </button>
        <button className={clsx(BOLD_FONT, 'w-[44px] text-left text-[13px]')}>A..Z</button>
        <button aria-label="ウインドウ" className="w-[11px] overflow-hidden">
            <Svg w={20} h={20}>
                <rect x="1.500" y="4.500" width="14" height="12" fill="#fff" stroke="#1c7fb8" />
                <path d="M1 6h15" stroke="#1c9bd8" strokeWidth="3" />
                <path d="M4 9h5v5H4zM8 10l3-2" stroke="#268a68" strokeWidth="1.500" />
            </Svg>
        </button>
    </div>
);

const StatusBar = () => (
    <footer className="flex h-[26px] items-center border-b border-white bg-[#f0eeee] text-[13px] leading-6 text-black *:h-full *:shrink-0 *:border-l *:border-[#dcd8d8]">
        <div className="w-[124px] text-center">２点線</div>
        <div className="min-w-0 flex-1 pl-1">始点を入力して下さい</div>
        <div className="flex w-[90px] items-center justify-center pl-1">
            <Svg w={16} h={16}>
                <path d="M3 5a5 5 0 1 0 8-1" stroke="#666" strokeWidth="2" />
                <path d="M7 2h7l-6 6z" fill="#666" stroke="none" />
            </Svg>
        </div>
        <div className="w-[80px] pl-1">S 0.402</div>
        <div className="flex w-[30px] items-center justify-center">
            <Svg w={20} h={20}>
                {[2, 6, 10, 14, 18].map((y) => <path key={y} d={`M1 ${y}.500h19`} stroke="#2a3fe0" strokeDasharray="1 3" />)}
                <circle cx="7" cy="12" r="3" fill="#ffd9a8" stroke="none" />
                <path d="M5.500 12h3M7 10.500v3" stroke="#c05a00" />
            </Svg>
        </div>
        <div className="w-[50px] pl-1 text-center">1</div>
        <div className="flex w-[30px] items-center justify-center">
            <Svg w={18} h={18}>
                <circle cx="9" cy="9" r="5" fill="#fff" />
                <path d="M9 9V4a5 5 0 0 1 5 5zM9 9v5a5 5 0 0 1-5-5z" fill="#555" stroke="none" />
                <path d="M9 1v16M1 9h16" />
            </Svg>
        </div>
        <div className="w-[100px] pl-1 text-[#444]">X 263.000</div>
        <div className="w-[100px] pl-1 text-[#444]">Y 402.000</div>
        <div className="flex w-[57px] justify-between overflow-hidden pl-1">
            <span>L</span>
            <span className="w-[17px] overflow-hidden">582</span>
        </div>
        <div className="flex w-[17px] items-end justify-end border-l-0!">
            <Svg w={12} h={12}>
                <path d="M9 3.500h2M5 7.500h2M9 7.500h2M1 11h2M5 11h2M9 11h2" stroke="#a8a8a8" strokeWidth="2" />
            </Svg>
        </div>
    </footer>
);

const App = () => (
    <div className={clsx(UI_FONT, "flex min-h-screen flex-col rounded-t-lg border-x-2 border-b-2 border-t-2 border-[#1c2630] bg-[#b9d1ea] bg-linear-to-b from-[#98b4d3] via-[#b9d1ea] via-5% to-[#b9d1ea] px-[6px] pb-[5px] [font-feature-settings:'palt']")}>
        <TitleBar />
        <MenuBar />
        <Toolbar />
        <main className="flex flex-1">
            <LeftPalette />
            <section className="min-w-0 flex-1 overflow-hidden bg-white">
                <Drawing />
            </section>
            <VerticalSplitter />
            <RightPanel />
        </main>
        <CommandBar />
        <StatusBar />
    </div>
);

export default App;
